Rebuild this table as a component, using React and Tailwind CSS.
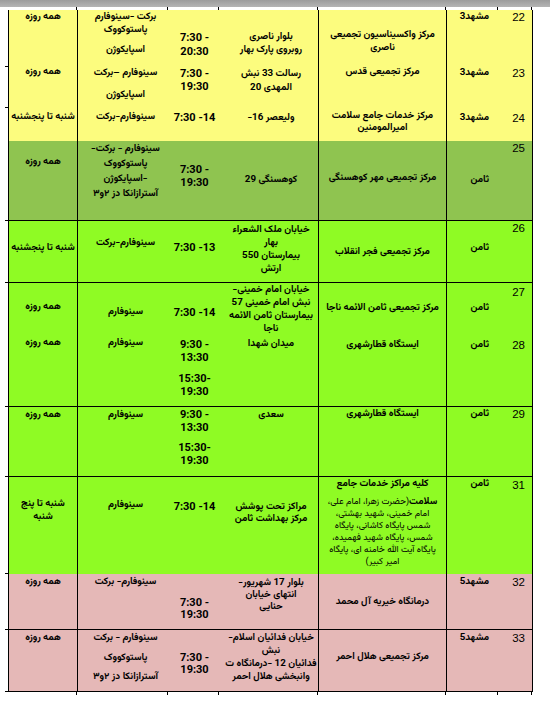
import React from "react";

const GRID = "grid grid-cols-[69px_91px_51px_99px_128px_52px_33px]";

function L({ children, lh = "leading-[14px]", cls = "" }) {
  return (
    <div dir="rtl" className={`whitespace-nowrap font-['Vazirmatn',sans-serif] font-bold text-[9.75px] ${lh} ${cls}`}>
      {children}
    </div>
  );
}

function T({ children, lh = "leading-[13px]", cls = "" }) {
  return (
    <div dir="ltr" className={`whitespace-nowrap text-[11px] font-bold font-['Roboto',sans-serif] ${lh} ${cls}`}>
      {children}
    </div>
  );
}

function Num({ children, cls = "" }) {
  return (
    <div className={`font-['Liberation_Sans',sans-serif] font-normal text-[11.5px] leading-[14px] ${cls}`}>
      {children}
    </div>
  );
}

function Row({ className, days, med, time, addr, center, city, num, tick = true }) {
  return (
    <div className="flex">
      <div className="w-[8px] flex flex-col justify-end">
        {tick ? <div className="ml-auto w-[3px] h-px bg-black" /> : null}
      </div>
      <div className={`${GRID} w-[525px] border-x border-black ${className}`}>
        <div className={`flex flex-col items-center border-r border-black ${days[0]}`}>{days[1]}</div>
        <div className={`flex flex-col items-center pl-[4px] ${med[0]}`}>{med[1]}</div>
        <div className={`flex flex-col items-center ${time[0]}`}>{time[1]}</div>
        <div className={`flex flex-col items-center pl-[4px] border-r border-black ${addr[0]}`}>{addr[1]}</div>
        <div className={`flex flex-col items-center border-r border-black ${center[0]}`}>{center[1]}</div>
        <div className={`flex flex-col items-end pr-[10px] ${city[0]}`}>{city[1]}</div>
        <div className={`flex flex-col items-end pr-[7px] ${num[0]}`}>{num[1]}</div>
      </div>
    </div>
  );
}

function Ticks({ className }) {
  return (
    <div className={`flex ${className}`}>
      <div className="w-[8px]" />
      <div className="w-[69px] border-r border-black" />
      <div className="w-[91px] border-r border-black" />
      <div className="w-[51px] border-r border-black" />
      <div className="w-[99px] border-r border-black" />
      <div className="w-[128px] border-r border-black" />
      <div className="w-[52px] border-r border-black" />
      <div className="w-[34px] border-r border-black" />
    </div>
  );
}

export default function App() {
  return (
    <div className="w-[550px] h-[703px] bg-white overflow-hidden text-black">
      <div className="h-[7px] bg-gradient-to-b from-[#9c9c9c] to-[#b4b4b4]" />
      <Ticks className="h-[3px]" />

      {/* 22 */}
      <Row
        className="h-[57px] bg-[#fcfc7e]"
        days={["pt-0", <L>همه روزه</L>]}
        med={["pt-0", <>
          <L lh="leading-[13px]">برکت -سینوفارم</L>
          <L lh="leading-[13px]">پاستوکووک</L>
          <L cls="mt-[7px]">اسپایکوژن</L>
        </>]}
        time={["pt-[21px]", <>
          <T lh="leading-[14px]">7:30 -</T>
          <T lh="leading-[14px]">20:30</T>
        </>]}
        addr={["pt-[20px]", <>
          <L lh="leading-[13px]">بلوار ناصری</L>
          <L lh="leading-[13px]">روبروی پارک بهار</L>
        </>]}
        center={["pt-[18px]", <>
          <L lh="leading-[13px]">مرکز واکسیناسیون تجمیعی</L>
          <L lh="leading-[13px]">ناصری</L>
        </>]}
        city={["pt-0", <L>مشهد3</L>]}
        num={["pt-0", <Num>22</Num>]}
      />
      {/* 23 */}
      <Row
        className="h-[41px] bg-[#fcfc7e]"
        days={["pt-0", <L cls="-mt-[2px]">همه روزه</L>]}
        med={["pt-0", <>
          <L cls="-mt-[1px]">سینوفارم –برکت</L>
          <L cls="mt-[8px]">اسپایکوژن</L>
        </>]}
        time={["pt-0", <>
          <T>7:30 -</T>
          <T>19:30</T>
        </>]}
        addr={["pt-0", <>
          <L>رسالت 33 نبش</L>
          <L>المهدی 20</L>
        </>]}
        center={["pt-0", <L cls="-mt-[2px]">مرکز تجمیعی قدس</L>]}
        city={["pt-0", <L cls="-mt-[1px]">مشهد3</L>]}
        num={["pt-0", <Num cls="-mt-[1px]">23</Num>]}
      />
      {/* 24 */}
      <Row
        className="h-[33px] bg-[#fcfc7e]"
        tick={false}
        days={["pt-[2px]", <L>شنبه تا پنجشنبه</L>]}
        med={["pt-[2px]", <L>سینوفارم-برکت</L>]}
        time={["pt-[3px]", <T lh="leading-[14px]">7:30 -14</T>]}
        addr={["pt-[3px]", <L>ولیعصر 16-</L>]}
        center={["pt-[2px]", <>
          <L lh="leading-[12px]">مرکز  خدمات جامع سلامت</L>
          <L lh="leading-[12px]">امیرالمومنین</L>
        </>]}
        city={["pt-[3px]", <L>مشهد3</L>]}
        num={["pt-[3px]", <Num>24</Num>]}
      />

      {/* 25 */}
      <Row
        className="h-[80px] bg-[#8fc450] border-b border-black"
        days={["pt-[14px]", <L>همه روزه</L>]}
        med={["pt-0", <>
          <L lh="leading-[15px]">سینوفارم - برکت-</L>
          <L lh="leading-[15px]">پاستوکووک</L>
          <L lh="leading-[15px]">-اسپایکوژن</L>
          <L lh="leading-[15px]">آسترازانکا دز ۲و۳</L>
        </>]}
        time={["pt-[22px]", <>
          <T>7:30 -</T>
          <T>19:30</T>
        </>]}
        addr={["pt-[32px]", <L>کوهسنگی 29</L>]}
        center={["pt-[30px]", <L>مرکز تجمیعی مهر کوهسنگی</L>]}
        city={["pt-[32px]", <L>ثامن</L>]}
        num={["pt-0", <Num>25</Num>]}
      />

      {/* 26 */}
      <Row
        className="h-[62px] bg-[#8ffb24] border-b border-black"
        days={["pt-[20px]", <L>شنبه تا پنجشنبه</L>]}
        med={["pt-[15px]", <L>سینوفارم-برکت</L>]}
        time={["pt-[20px]", <T lh="leading-[14px]">7:30 -13</T>]}
        addr={["pt-[2px]", <>
          <L lh="leading-[13px]">خیابان ملک الشعراء</L>
          <L lh="leading-[13px]">بهار</L>
          <L lh="leading-[13px]">بیمارستان 550</L>
          <L lh="leading-[13px]">ارتش</L>
        </>]}
        center={["pt-[24px]", <L>مرکز تجمیعی فجر انقلاب</L>]}
        city={["pt-[20px]", <L>ثامن</L>]}
        num={["pt-0", <Num>26</Num>]}
      />

      {/* 27 / 28 */}
      <Row
        className="h-[124px] bg-[#8ffb24] border-b border-black"
        days={["pt-[17px]", <>
          <L>همه روزه</L>
          <L cls="mt-[22px]">همه روزه</L>
        </>]}
        med={["pt-[22px]", <>
          <L>سینوفارم</L>
          <L cls="mt-[17px]">سینوفارم</L>
        </>]}
        time={["pt-[23px]", <>
          <T lh="leading-[14px]">7:30 -14</T>
          <T cls="mt-[18px]">9:30 -</T>
          <T>13:30</T>
          <T cls="mt-[8px]">15:30-</T>
          <T>19:30</T>
        </>]}
        addr={["pt-0", <>
          <L lh="leading-[13px]">خیابان امام خمینی-</L>
          <L lh="leading-[13px]">نبش امام خمینی 57</L>
          <L lh="leading-[13px]">بیمارستان ثامن الائمه</L>
          <L lh="leading-[13px]">ناجا</L>
          <L cls="mt-[2px]">میدان شهدا</L>
        </>]}
        center={["pt-[18px]", <>
          <L>مرکز تجمیعی ثامن  الائمه ناجا</L>
          <L cls="mt-[23px]">ایستگاه قطارشهری</L>
        </>]}
        city={["pt-[18px]", <>
          <L>ثامن</L>
          <L cls="mt-[23px]">ثامن</L>
        </>]}
        num={["pt-[2px]", <>
          <Num>27</Num>
          <Num cls="mt-[39px]">28</Num>
        </>]}
      />

      {/* 29 */}
      <Row
        className="h-[70px] bg-[#8ffb24] border-b border-black"
        days={["pt-[1px]", <L>همه روزه</L>]}
        med={["pt-[1px]", <L>سینوفارم</L>]}
        time={["pt-[1px]", <>
          <T>9:30 -</T>
          <T>13:30</T>
          <T cls="mt-[7px]">15:30-</T>
          <T>19:30</T>
        </>]}
        addr={["pt-[1px]", <L>سعدی</L>]}
        center={["pt-0", <L>ایستگاه قطارشهری</L>]}
        city={["pt-0", <L>ثامن</L>]}
        num={["pt-0", <Num>29</Num>]}
      />

      {/* 31 */}
      <Row
        className="h-[97px] bg-[#8ffb24]"
        days={["pt-[20px]", <>
          <L lh="leading-[13px]">شنبه تا پنج</L>
          <L lh="leading-[13px]">شنبه</L>
        </>]}
        med={["pt-[21px]", <L>سینوفارم</L>]}
        time={["pt-[23px]", <T lh="leading-[14px]">7:30 -14</T>]}
        addr={["pt-[24px]", <>
          <L lh="leading-[12px]">مراکز تحت پوشش</L>
          <L lh="leading-[12px]">مرکز بهداشت ثامن</L>
        </>]}
        center={["pt-0", <>
          <L>کلیه مراکز خدمات جامع</L>
          <div dir="rtl" className="mt-[5px] text-center leading-[12px] font-normal text-[9px] font-['Vazirmatn',sans-serif] whitespace-nowrap">
            <div><span className="font-bold text-[9.75px]">سلامت</span>(حضرت زهرا، امام علی،</div>
            <div>امام خمینی، شهید بهشتی،</div>
            <div>شمس پایگاه کاشانی، پایگاه</div>
            <div>شمس، پایگاه شهید فهمیده،</div>
            <div>پایگاه آیت الله خامنه ای، پایگاه</div>
            <div>امیر کبیر)</div>
          </div>
        </>]}
        city={["pt-0", <L>ثامن</L>]}
        num={["pt-[1px]", <Num>31</Num>]}
      />

      {/* 32 */}
      <Row
        className="h-[56px] bg-[#e5b8b7] border-b border-black"
        days={["pt-[1px]", <L>همه روزه</L>]}
        med={["pt-[1px]", <L>سینوفارم- برکت</L>]}
        time={["pt-[23px]", <>
          <T lh="leading-[12px]">7:30 -</T>
          <T lh="leading-[12px]">19:30</T>
        </>]}
        addr={["pt-[3px]", <>
          <L lh="leading-[12px]">بلوار 17 شهریور-</L>
          <L lh="leading-[12px]">انتهای خیابان</L>
          <L lh="leading-[12px]">حنایی</L>
        </>]}
        center={["pt-[21px]", <L>درمانگاه خیریه آل محمد</L>]}
        city={["pt-[1px]", <L>مشهد5</L>]}
        num={["pt-[1px]", <Num>32</Num>]}
      />

      {/* 33 */}
      <Row
        className="h-[62px] bg-[#e5b8b7] border-b border-black"
        days={["pt-[1px]", <L>همه روزه</L>]}
        med={["pt-[1px]", <>
          <L>سینوفارم - برکت</L>
          <L cls="mt-[6px]">پاستوکووک</L>
          <L cls="mt-[5px]">آسترازانکا دز ۲و۳</L>
        </>]}
        time={["pt-[22px]", <>
          <T lh="leading-[12px]">7:30 -</T>
          <T lh="leading-[12px]">19:30</T>
        </>]}
        addr={["pt-[1px]", <>
          <L lh="leading-[13px]">خیابان فدائیان اسلام-</L>
          <L lh="leading-[13px]">نبش</L>
          <L lh="leading-[13px]">فدائیان 12 -درمانگاه ت</L>
          <L lh="leading-[13px]">وانبخشی هلال احمر</L>
        </>]}
        center={["pt-[20px]", <L>مرکز تجمیعی هلال احمر</L>]}
        city={["pt-[1px]", <L>مشهد5</L>]}
        num={["pt-[1px]", <Num>33</Num>]}
      />
      <Ticks className="h-[3px]" />
    </div>
  );
}
